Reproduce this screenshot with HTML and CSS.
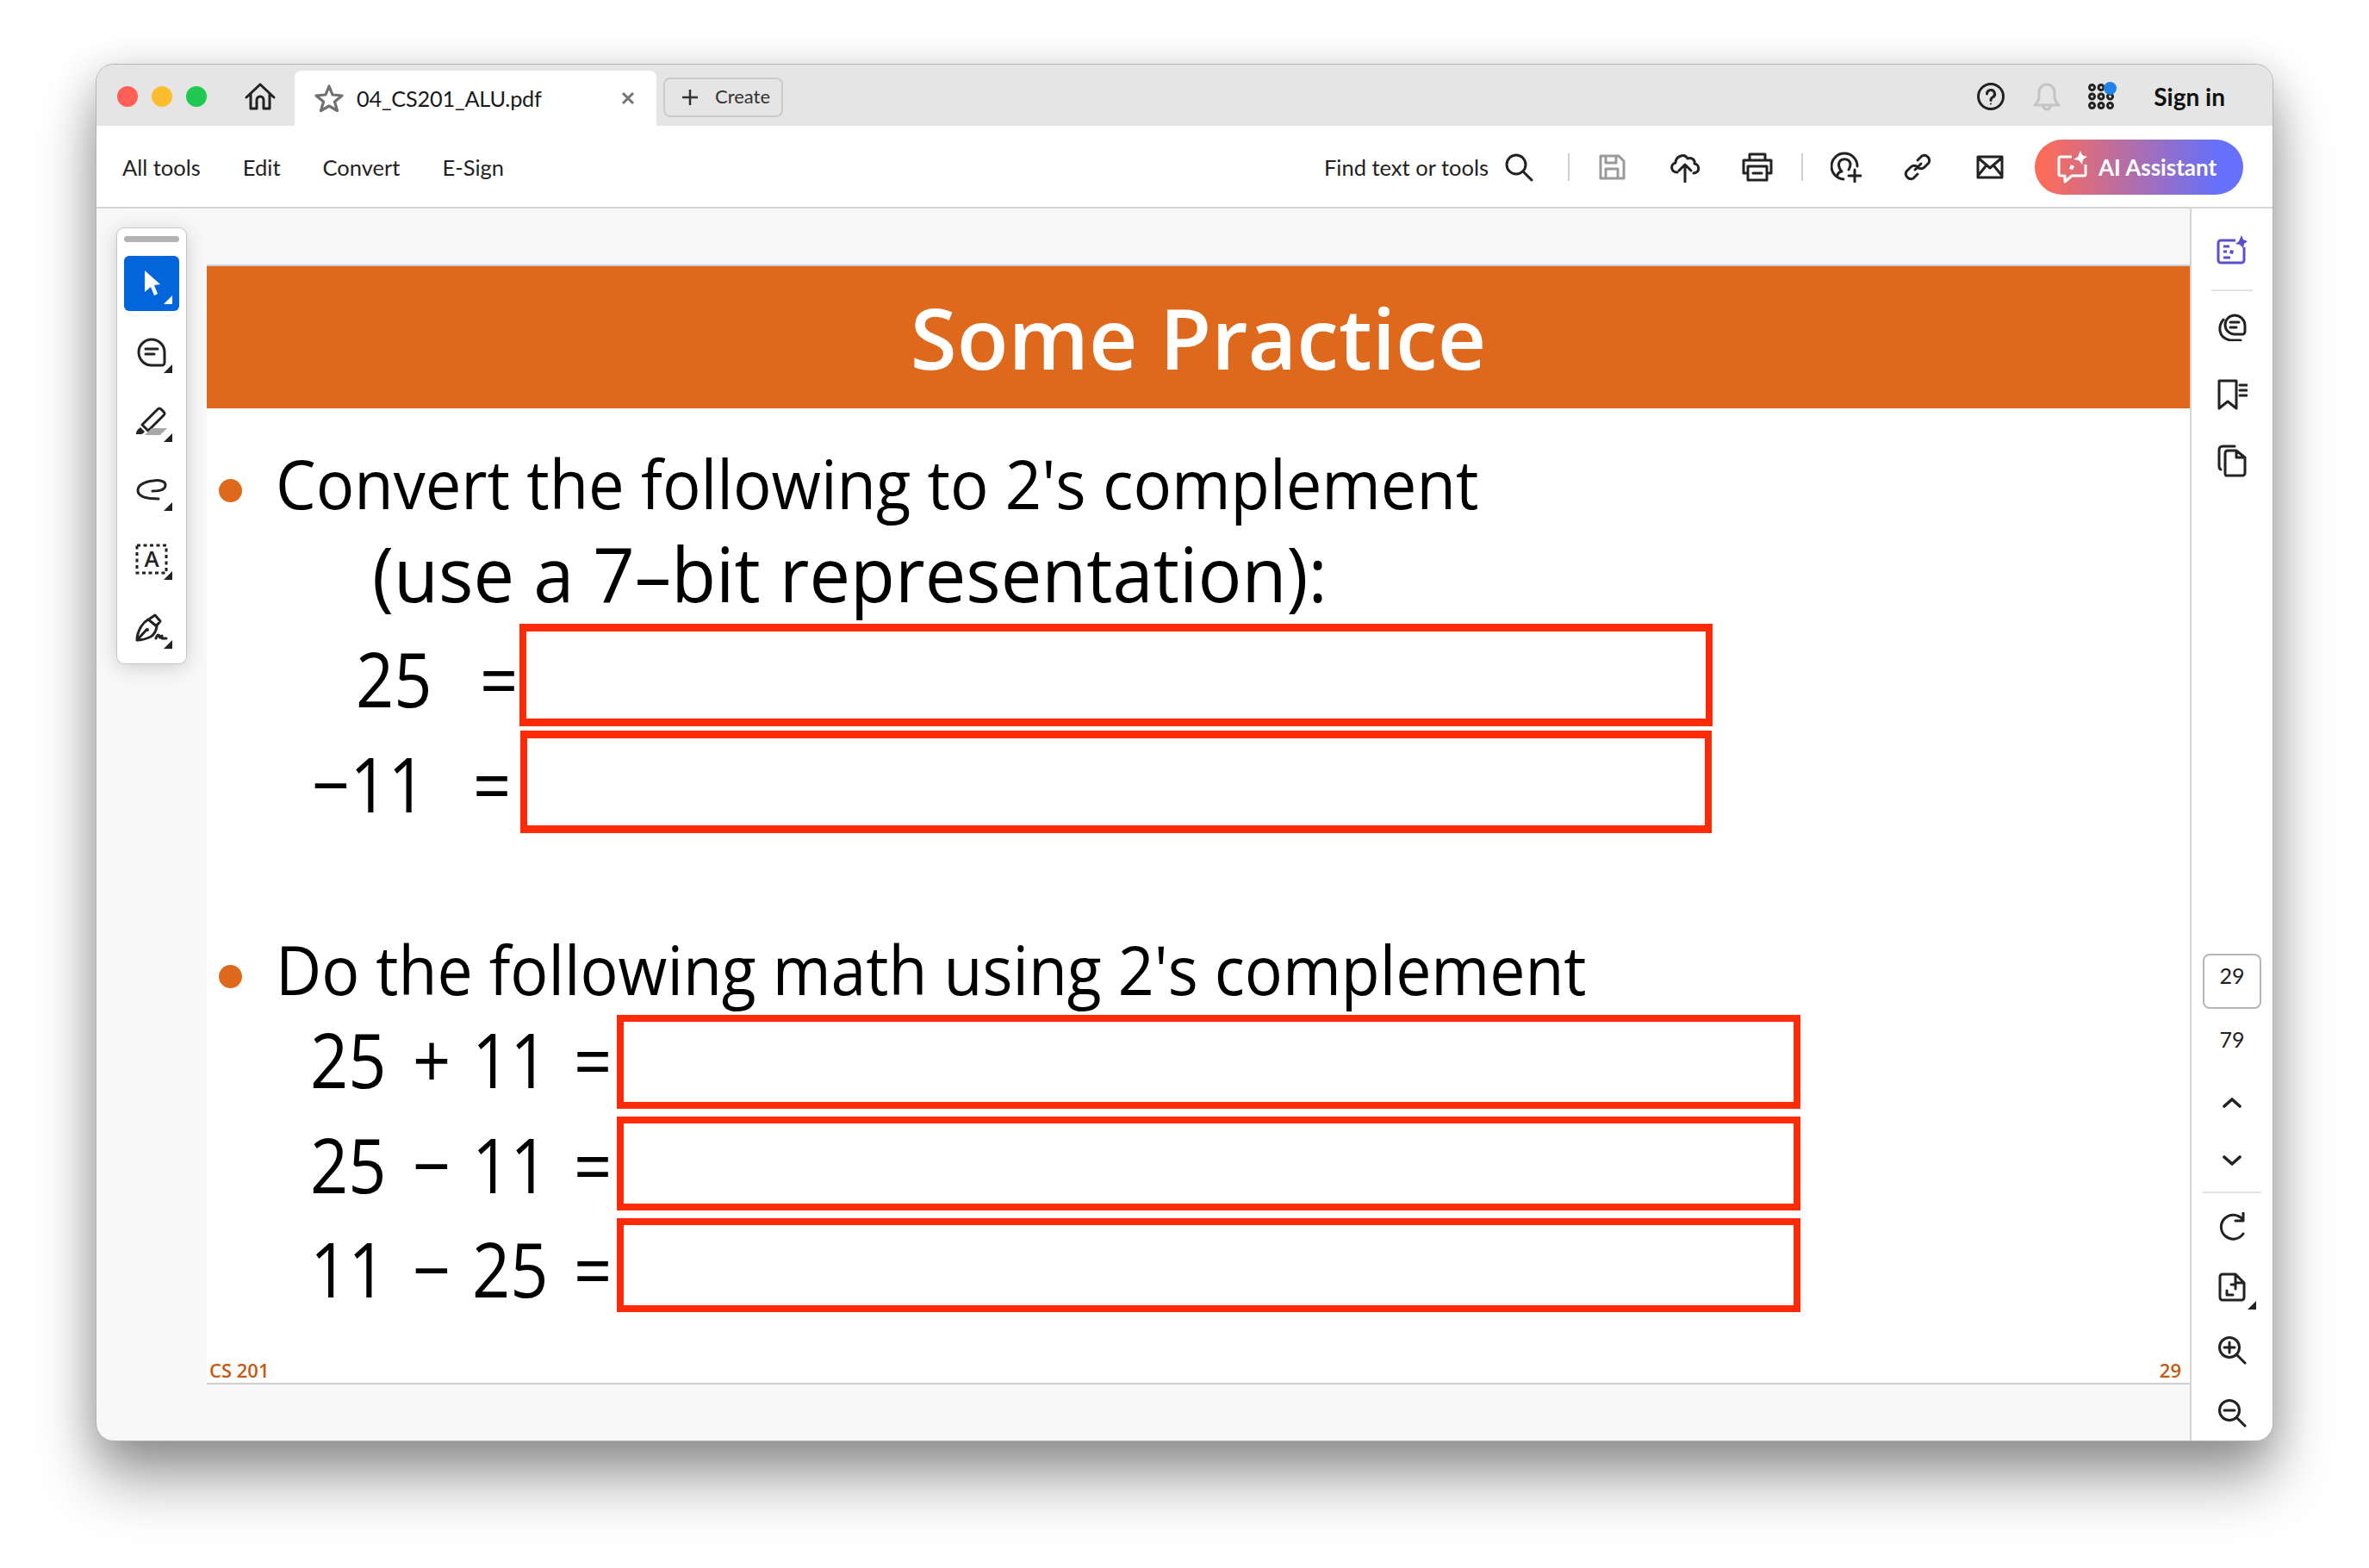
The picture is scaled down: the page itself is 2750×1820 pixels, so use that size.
FILE: index.html
```html
<!DOCTYPE html>
<html lang="en">
	<head>
		<meta charset="utf-8" />
		<title>04_CS201_ALU.pdf</title>
		<link rel="stylesheet" href="styles.css">
	</head>
	<body>
		<div class="window">
			<header class="titlebar">
				<div class="lights">
					<span class="light light-red"></span>
					<span class="light light-yellow"></span>
					<span class="light light-green"></span>
				</div>
				<svg class="home" width="38" height="34" viewBox="0 0 38 34"><path d="M19 3 L35 18 M19 3 L3 18 M8 14 V31 H15 V21 a4 4 0 0 1 8 0 V31 H30 V14" /></svg>
				<div class="tab">
					<svg class="star" width="34" height="34" viewBox="0 0 34 34"><path d="M17 3 L21 13 L32 14 L23.500 21 L26.500 31.500 L17 26 L7.500 31.500 L10.500 21 L2 14 L13 13 Z" /></svg>
					<span class="tab-name">04_CS201_ALU.pdf</span>
					<svg class="tab-close" width="16" height="16" viewBox="0 0 16 16"><path d="M2 2 L14 14 M14 2 L2 14" /></svg>
				</div>
				<button class="create">
					<svg width="20" height="20" viewBox="0 0 20 20"><path d="M10 1 V19 M1 10 H19" /></svg>
					Create
				</button>
				<div class="title-right">
					<svg class="ico" width="32" height="32" viewBox="0 0 32 32"><circle cx="16" cy="16" r="14.500" /><path d="M11.500 13 a4.500 4.500 0 1 1 6.500 4 q-2 1 -2 3.500" /><circle class="solid" cx="16" cy="24.500" r="1" /></svg>
					<svg class="ico bell" width="32" height="34" viewBox="0 0 32 34"><path d="M2 27 q4 -3 5 -9 V12 a9 9 0 0 1 18 0 V18 q1 6 5 9 Z M12 28 a4 4 0 0 0 8 0" /></svg>
					<div class="apps">
						<svg class="ico" width="30" height="30" viewBox="0 0 30 30"><g class="dots"><circle cx="4.500" cy="4.500" r="3" /><circle cx="15" cy="4.500" r="3" /><circle cx="4.500" cy="15" r="3" /><circle cx="15" cy="15" r="3" /><circle cx="25.500" cy="15" r="3" /><circle cx="4.500" cy="25.500" r="3" /><circle cx="15" cy="25.500" r="3" /><circle cx="25.500" cy="25.500" r="3" /></g></svg>
						<span class="apps-dot"></span>
					</div>
					<span class="sign-in">Sign in</span>
				</div>
			</header>

			<nav class="toolbar">
				<div class="menu">
					<span>All tools</span>
					<span>Edit</span>
					<span>Convert</span>
					<span>E-Sign</span>
				</div>
				<div class="actions">
					<span class="find">Find text or tools</span>
					<svg class="ico act-search" width="34" height="34" viewBox="0 0 34 34"><circle cx="14" cy="14" r="11" /><path d="M22 22 L32 32" /></svg>
					<span class="act-sep"></span>
					<svg class="ico ico-gray act-save" width="32" height="32" viewBox="0 0 32 32"><path d="M3 3 H24 L30 9 V29 H3 Z M9 3 V11 H21 V3 M9 29 V18 H23 V29" /></svg>
					<svg class="ico act-cloud" width="36" height="36" viewBox="0 0 36 36"><path d="M9 24 C2 24 0 15 7 13 C7 6 17 1 21 8 C26 6 30 10 29 14 C35 15 36 24 28 25 M18 35 V15 M11 22 L18 15 L25 22" /></svg>
					<svg class="ico act-print" width="36" height="34" viewBox="0 0 36 34"><path d="M9 9 V2 H27 V9 M7 24 H2 V9 H34 V24 H29 M7 16 H29 V32 H7 Z M13 24 H23" /></svg>
					<span class="act-sep act-sep-b"></span>
					<svg class="ico act-share" width="36" height="36" viewBox="0 0 36 36"><path d="M31 17 A15 15 0 1 0 15 32 M8 28 Q8 24 13 23 Q9 19 9.500 14 A7 7 0 0 1 23 14 Q23 18 21 21 M28 21 V35 M21 28 H35" /></svg>
					<svg class="ico act-link" width="34" height="34" viewBox="0 0 34 34"><path d="M14 20 L21 13 M17 9 L22 4 a6 6 0 0 1 8 8 L25 17 a6 6 0 0 1 -7 1 M17 25 L12 30 a6 6 0 0 1 -8 -8 L9 17 a6 6 0 0 1 7 -1" /></svg>
					<svg class="ico act-mail" width="32" height="28" viewBox="0 0 32 28"><path d="M2 2 H30 V26 H2 Z M2 3 L16 15 L30 3 M2 24 L11 13 M30 24 L21 13" /></svg>
					<button class="ai">
						<svg class="ai-icon" width="36" height="38" viewBox="0 0 36 38"><path d="M17 7 H4 a2 2 0 0 0 -2 2 V27 a2 2 0 0 0 2 2 H9 V36 L17 29 H31 a2 2 0 0 0 2 -2 V16" /><path class="solid" d="M27 0 L29 5 L35 7 L30 10 L29 16 L25 11 L19 10 L24 7 Z M16 16 L20 18 L18 22 L14 21 Z" /></svg>
						AI Assistant
					</button>
				</div>
			</nav>

			<div class="work">
				<main class="canvas">
					<aside class="tools">
						<div class="tools-handle"></div>
						<div class="tool tool-active">
							<svg width="64" height="64" viewBox="0 0 64 64"><path class="solid-white" d="M24 17 L42 33 L35 34 L39 44 L35 46 L31 36 L24 42 Z" /></svg>
						</div>
						<div class="tool">
							<svg class="ico" width="34" height="34" viewBox="0 0 34 34"><path d="M17 2 a15 15 0 0 1 15 15 V29 a3 3 0 0 1 -3 3 H17 a15 15 0 1 1 0 -30 Z M10 13 H24 M10 19 H20" /></svg>
						</div>
						<div class="tool">
							<svg class="ico" width="38" height="34" viewBox="0 0 38 34"><path d="M8 21 L26 3 Q28 1 30 3 L33 6 Q35 8 33 10 L15 28 Z" /><path class="solid" d="M1 32 Q1 27 6 24 L11 29 Q9 32 7 32 Z" /><path class="solid-gray" d="M19 25 H37 L29 33 H11 Z" /></svg>
						</div>
						<div class="tool">
							<svg class="ico" width="36" height="26" viewBox="0 0 36 26"><path d="M19 14 C26 14 34 13 34 7 C34 2 26 1 20 2 C10 3 2 7 2 13 C2 20 12 23 26 23" /></svg>
						</div>
						<div class="tool">
							<svg class="ico-a" width="38" height="36" viewBox="0 0 38 36"><rect x="2" y="2" width="34" height="32" /><text x="19" y="27" text-anchor="middle">A</text></svg>
						</div>
						<div class="tool">
							<svg class="ico" width="38" height="34" viewBox="0 0 38 34"><path d="M17 6 L23 2 L29 9 L25 14 M15 7 L25 15 Q24 23 18 27 Q10 31 2 31 Q2 23 7 15 Q10 10 15 7 M3 30 L13 19 M24 29 Q26 23 28 26 Q28 30 31 26 L31 29 L36 29" /><circle class="solid" cx="14" cy="19" r="2" /></svg>
						</div>
					</aside>

					<article class="slide">
						<h1 class="slide-title">Some Practice</h1>

						<div class="point point-a">
							<span class="dot"></span>
							<span class="point-text">Convert the following to 2's complement</span>
						</div>
						<div class="sub"><span class="sub-text">(use a 7&#8211;bit representation):</span></div>

						<div class="math math-1">
							<span class="expr">25</span>
							<span class="eq">=</span>
							<div class="answer"></div>
						</div>
						<div class="math math-2">
							<span class="expr">&#8722;11</span>
							<span class="eq">=</span>
							<div class="answer"></div>
						</div>

						<div class="point point-b">
							<span class="dot"></span>
							<span class="point-text">Do the following math using 2's complement</span>
						</div>

						<div class="math math-3">
							<span class="num">25</span><span class="op">+</span><span class="num-end">11</span>
							<span class="eq">=</span>
							<div class="answer"></div>
						</div>
						<div class="math math-4">
							<span class="num">25</span><span class="op">&#8722;</span><span class="num-end">11</span>
							<span class="eq">=</span>
							<div class="answer"></div>
						</div>
						<div class="math math-5">
							<span class="num">11</span><span class="op">&#8722;</span><span class="num-end">25</span>
							<span class="eq">=</span>
							<div class="answer"></div>
						</div>

						<footer class="slide-foot">
							<span>CS 201</span>
							<span>29</span>
						</footer>
					</article>
				</main>

				<aside class="side">
					<div class="side-btn">
						<svg class="ico-ai" width="36" height="36" viewBox="0 0 36 36"><path d="M22 7 H5 a3 3 0 0 0 -3 3 V30 a3 3 0 0 0 3 3 H29 a3 3 0 0 0 3 -3 V15 M8 14 H15 M8 20 H12 M8 27 H16" /><path class="fill" d="M29 1 L31 6 L36 8 L32 11 L31 16 L27 12 L22 11 L26 8 Z M16 18 L20 19 L19 23 L15 22 Z" /></svg>
					</div>
					<div class="side-sep side-sep-top"></div>
					<div class="side-btn">
						<svg class="ico" width="34" height="32" viewBox="0 0 34 32"><path d="M20 2 a12 12 0 0 1 12 12 V21 a3 3 0 0 1 -3 3 H20 a11 11 0 1 1 0 -22 Z M15 10 H25 M15 16 H22 M7 7 C1 14 0 28 15 31 H27" /></svg>
					</div>
					<div class="side-btn">
						<svg class="ico" width="36" height="36" viewBox="0 0 36 36"><path d="M3 2 H23 V34 L13 26 L3 34 Z M27 7 H35 M27 13 H35 M27 19 H35" /></svg>
					</div>
					<div class="side-btn">
						<svg class="ico" width="34" height="38" viewBox="0 0 34 38"><path d="M10 36 H29 a3 3 0 0 0 3 -3 V15 L22 7 H12 a3 3 0 0 0 -3 3 V33 a3 3 0 0 0 1 3 Z M22 7 V15 H32 M20 2 H6 a4 4 0 0 0 -4 4 V26 a4 4 0 0 0 2 3" /></svg>
					</div>

					<div class="side-lower">
						<div class="page-box">29</div>
						<div class="page-total">79</div>
						<svg class="ico chev chev-up" width="22" height="14" viewBox="0 0 22 14"><path d="M2 11 L11 3 L20 11" /></svg>
						<svg class="ico chev chev-down" width="22" height="14" viewBox="0 0 22 14"><path d="M2 3 L11 11 L20 3" /></svg>
						<div class="side-sep side-sep-low"></div>
						<svg class="ico s-rotate" width="34" height="34" viewBox="0 0 34 34"><path d="M30 25 A14 14 0 1 1 29 8 M30 1 V10 H21" /></svg>
						<div class="s-page">
							<svg class="ico" width="32" height="34" viewBox="0 0 32 34"><path d="M5 2 H20 L30 12 V29 a3 3 0 0 1 -3 3 H5 a3 3 0 0 1 -3 -3 V5 a3 3 0 0 1 3 -3 Z M20 2 V12 H30 M15 14 H20 V19 M17 26 H10 V21" /></svg>
						</div>
						<svg class="ico s-zoomin" width="34" height="34" viewBox="0 0 34 34"><circle cx="14" cy="14" r="11.500" /><path d="M22.500 22.500 L32 32 M8 14 H20 M14 8 V20" /></svg>
						<svg class="ico s-zoomout" width="34" height="34" viewBox="0 0 34 34"><circle cx="14" cy="14" r="11.500" /><path d="M22.500 22.500 L32 32 M8 14 H20" /></svg>
					</div>
				</aside>
			</div>
		</div>
	</body>
</html>
```

FILE: styles.css
```css
:root {
	--ink: #222;
	--line: #d5d5d5;
	--orange: #de691d;
	--red: #ff2a06;
	--slide-font: "Open Sans", "DejaVu Sans", sans-serif;
	--ui-font: Lato, "Open Sans", sans-serif;
}

* {
	margin: 0;
	box-sizing: border-box;
}

html,
body {
	height: 100%;
}

body {
	background: #fff;
	font-family: var(--ui-font);
	color: var(--ink);
	padding: 75px 0 0 112px;
}

svg {
	display: block;
	flex: none;
}

button {
	font-family: inherit;
	border: none;
	cursor: pointer;
}

.ico path,
.ico circle {
	fill: none;
	stroke: var(--ink);
	stroke-width: 3;
	stroke-linecap: round;
	stroke-linejoin: round;
}

.ico .solid,
.solid {
	fill: var(--ink);
	stroke: none;
}

.ico .solid-gray {
	fill: #a8a8a8;
	stroke: none;
}

.solid-white {
	fill: #fff;
}

.window {
	width: 2526px;
	height: 1597px;
	display: flex;
	flex-direction: column;
	overflow: hidden;
	border-radius: 20px;
	background: #f8f8f8;
	box-shadow: 0 0 0 1px #b5b5b5, 0 46px 70px rgba(0, 0, 0, 0.36), 0 10px 50px rgba(0, 0, 0, 0.2);
}

/* title bar */
.titlebar {
	height: 71px;
	flex: none;
	display: flex;
	align-items: flex-end;
	background: #e5e5e5;
}

.lights {
	display: flex;
	gap: 16px;
	padding: 0 0 22px 24px;
}

.light {
	width: 24px;
	height: 24px;
	border-radius: 50%;
}

.light-red {
	background: #ff5f57;
}

.light-yellow {
	background: #febc2e;
}

.light-green {
	background: #1fc94f;
}

.home {
	margin: 0 0 17px 43px;
}

.home path {
	fill: none;
	stroke: var(--ink);
	stroke-width: 3;
	stroke-linejoin: round;
	stroke-linecap: round;
}

.tab {
	width: 420px;
	height: 64px;
	margin-left: 21px;
	display: flex;
	align-items: center;
	background: #fff;
	border-radius: 8px 8px 0 0;
	padding-left: 23px;
}

.star path {
	fill: none;
	stroke: #707070;
	stroke-width: 3.200;
	stroke-linejoin: round;
}

.tab-name {
	margin-left: 15px;
	font-size: 25.300px;
	letter-spacing: -0.200px;
	width: 307px;
	color: #1a1a1a;
}

.tab-close path {
	fill: none;
	stroke: #747474;
	stroke-width: 3;
}

.create {
	width: 139px;
	height: 46px;
	margin: 0 0 10px 8px;
	display: flex;
	align-items: center;
	gap: 19px;
	padding: 0 0 3px 19px;
	background: #e5e5e5;
	border: 2px solid #cbcbcb;
	border-radius: 8px;
	font-size: 22px;
	color: #333;
}

.create svg {
	margin-top: 3px;
}

.create path {
	stroke: #333;
	stroke-width: 2.500;
}

.title-right {
	margin-left: auto;
	height: 71px;
	display: flex;
	align-items: center;
	padding: 3px 55px 0 0;
}

.bell {
	margin-left: 33px;
}

.ico.bell path {
	stroke: #c4c4c4;
}

.apps {
	position: relative;
	margin-left: 32px;
}

.apps-dot {
	position: absolute;
	top: -2px;
	right: -3px;
	width: 15px;
	height: 15px;
	border-radius: 50%;
	background: #1e82e6;
}

.ico .dots circle {
	stroke-width: 3;
}

.sign-in {
	margin-left: 46px;
	font-size: 28px;
	font-weight: 700;
	color: #111;
}

/* tool bar */
.toolbar {
	height: 96px;
	flex: none;
	display: flex;
	align-items: center;
	justify-content: space-between;
	background: #fff;
	border-bottom: 2px solid var(--line);
	padding: 2px 34px 0 30px;
}

.menu {
	display: flex;
	font-size: 25.500px;
	gap: 49px;
}

.actions {
	display: flex;
	align-items: center;
}

.find {
	font-size: 25.500px;
}

.act-search {
	margin-left: 18px;
}

.act-sep {
	width: 2px;
	height: 32px;
	margin-left: 40px;
	background: #cfcfcf;
}

.ico.ico-gray path {
	stroke: #9a9a9a;
}

.act-save {
	margin-left: 33px;
}

.act-cloud {
	margin-left: 51px;
}

.act-print {
	margin-left: 48px;
}

.act-sep-b {
	margin-left: 33px;
}

.act-share {
	margin-left: 32px;
}

.act-link {
	margin-left: 48px;
}

.act-mail {
	margin-left: 51px;
}

.ai {
	width: 242px;
	height: 64px;
	margin-left: 36px;
	display: flex;
	align-items: center;
	gap: 12px;
	padding-left: 26px;
	border-radius: 32px;
	background: linear-gradient(90deg, #ff6c55 2%, #6670fb 88%);
	color: #fff;
	font-size: 26px;
	font-weight: 700;
}

.ai-icon path {
	fill: none;
	stroke: #fff;
	stroke-width: 3;
	stroke-linejoin: round;
}

.ai-icon .solid {
	fill: #fff;
	stroke: none;
}

/* work area */
.work {
	flex: 1;
	min-height: 0;
	display: flex;
}

.canvas {
	position: relative;
	flex: 1;
	display: flex;
	padding: 65px 0 65px 128px;
}

.tools {
	position: absolute;
	top: 23px;
	left: 24px;
	width: 80px;
	height: 505px;
	padding: 9px 8px;
	display: flex;
	flex-direction: column;
	gap: 16px;
	background: #fff;
	border-radius: 8px;
	box-shadow: 0 0 0 1px #c4c4c4, 0 4px 24px rgba(0, 0, 0, 0.18);
}

.tools-handle {
	height: 8px;
	border-radius: 4px;
	background: #b3b3b3;
}

.tool {
	position: relative;
	height: 64px;
	flex: none;
	display: flex;
	align-items: center;
	justify-content: center;
	border-radius: 6px;
}

.tool::after {
	content: "";
	position: absolute;
	right: 8px;
	bottom: 8px;
	width: 10px;
	height: 10px;
	background: var(--ink);
	clip-path: polygon(100% 0, 100% 100%, 0 100%);
}

.tool-active {
	background: #0265dc;
}

.tool-active::after {
	background: #fff;
}

.ico-a rect {
	fill: none;
	stroke: var(--ink);
	stroke-width: 3;
	stroke-dasharray: 4 3.500;
}

.ico-a text {
	font-family: "Open Sans", sans-serif;
	font-size: 26px;
	font-weight: 600;
	fill: var(--ink);
}

/* slide */
.slide {
	flex: 1;
	display: flex;
	flex-direction: column;
	background: #fff;
	border-top: 2px solid #cfcfcf;
	border-bottom: 2px solid #cfcfcf;
	font-family: var(--slide-font);
	color: #000;
}

.slide-title {
	height: 165px;
	flex: none;
	text-align: center;
	background: var(--orange);
	color: #fff;
	font-size: 98px;
	font-weight: 600;
	line-height: 165px;
}

.point {
	display: flex;
	align-items: center;
	padding-left: 14px;
	font-size: 78px;
	line-height: 110px;
	height: 110px;
}

.point-a {
	margin-top: 32px;
}

.point-b {
	margin-top: 103px;
}

.dot {
	width: 27px;
	height: 27px;
	flex: none;
	border-radius: 50%;
	background: var(--orange);
	margin: 16px 39px 0 0;
}

.point-text {
	display: inline-block;
	white-space: nowrap;
	transform-origin: left center;
}

.point-a .point-text {
	transform: scaleX(0.95);
}

.point-b .point-text {
	transform: scaleX(0.94);
}

.sub {
	height: 117px;
	margin-top: -9px;
	padding-left: 192px;
	font-size: 87px;
	line-height: 117px;
	white-space: nowrap;
}

.sub-text {
	display: inline-block;
	transform: scaleX(0.975);
	transform-origin: left center;
}

.math {
	display: flex;
	font-size: 87px;
	line-height: 1;
	white-space: nowrap;
}

.expr,
.num,
.op,
.num-end,
.eq {
	display: block;
	height: 87px;
	transform: scaleX(0.89);
	transform-origin: left center;
}

.answer {
	flex: none;
	border: solid var(--red);
	border-width: 9px 8px;
}

.math-1 {
	height: 119px;
	padding-left: 173px;
}

.math-2 {
	height: 119px;
	margin-top: 5px;
	padding-left: 122px;
}

.math-1 .expr {
	width: 144px;
	margin-top: 20px;
}

.math-1 .eq {
	width: 46px;
	margin-top: 20px;
}

.math-2 .expr {
	width: 187px;
	margin-top: 18px;
}

.math-2 .eq {
	width: 55px;
	margin-top: 18px;
}

.math-1 .answer {
	width: 1385px;
	height: 119px;
}

.math-2 .answer {
	width: 1383px;
	height: 119px;
}

.math-3,
.math-4,
.math-5 {
	height: 109px;
	padding-left: 120px;
}

.math-3 {
	margin-top: -2px;
}

.math-4,
.math-5 {
	margin-top: 9px;
}

.math-3 .answer,
.math-4 .answer,
.math-5 .answer {
	width: 1374px;
	height: 109px;
	border-width: 8px;
}

.num {
	width: 119px;
}

.op {
	width: 69px;
}

.num-end {
	width: 118px;
}

.math-3 .eq,
.math-4 .eq,
.math-5 .eq {
	width: 50px;
}

.math-3 span {
	margin-top: 8px;
}

.math-4 span {
	margin-top: 12px;
}

.math-5 span {
	margin-top: 15px;
}

.slide-foot {
	margin-top: auto;
	display: flex;
	justify-content: space-between;
	padding: 0 10px 0 3px;
	font-size: 22px;
	font-weight: 600;
	color: #c55a11;
	line-height: 30px;
}

/* right rail */
.side {
	width: 96px;
	flex: none;
	display: flex;
	flex-direction: column;
	gap: 13.500px;
	padding-top: 16px;
	background: #fff;
	border-left: 2px solid var(--line);
}

.side-btn {
	height: 64px;
	flex: none;
	display: flex;
	align-items: center;
	justify-content: center;
}

.ico-ai path {
	fill: none;
	stroke: #5a4fcf;
	stroke-width: 3;
	stroke-linejoin: round;
}

.ico-ai .fill {
	fill: #5a4fcf;
	stroke: none;
}

.side-sep {
	height: 2px;
	flex: none;
	background: #e2e2e2;
}

.side-sep-top {
	width: 48px;
	margin: 0 0 -3px 23px;
}

.side-lower {
	margin-top: auto;
	padding-bottom: 15px;
	display: flex;
	flex-direction: column;
	align-items: center;
	font-size: 25px;
}

.page-box {
	width: 68px;
	height: 64px;
	padding-top: 8px;
	text-align: center;
	border: 2px solid #b5b5b5;
	border-radius: 8px;
}

.page-total {
	margin-top: 20px;
	line-height: 30px;
}

.ico.chev path {
	stroke-width: 3.600;
}

.chev-up {
	margin-top: 52px;
}

.chev-down {
	margin-top: 53px;
}

.side-sep-low {
	width: 68px;
	margin-top: 29px;
}

.s-rotate {
	margin-top: 22px;
}

.s-page {
	position: relative;
	margin-top: 36px;
}

.s-page::after {
	content: "";
	position: absolute;
	right: -12px;
	bottom: -9px;
	width: 10px;
	height: 10px;
	background: var(--ink);
	clip-path: polygon(100% 0, 100% 100%, 0 100%);
}

.s-zoomin {
	margin-top: 39px;
}

.s-zoomout {
	margin-top: 39px;
}
```
